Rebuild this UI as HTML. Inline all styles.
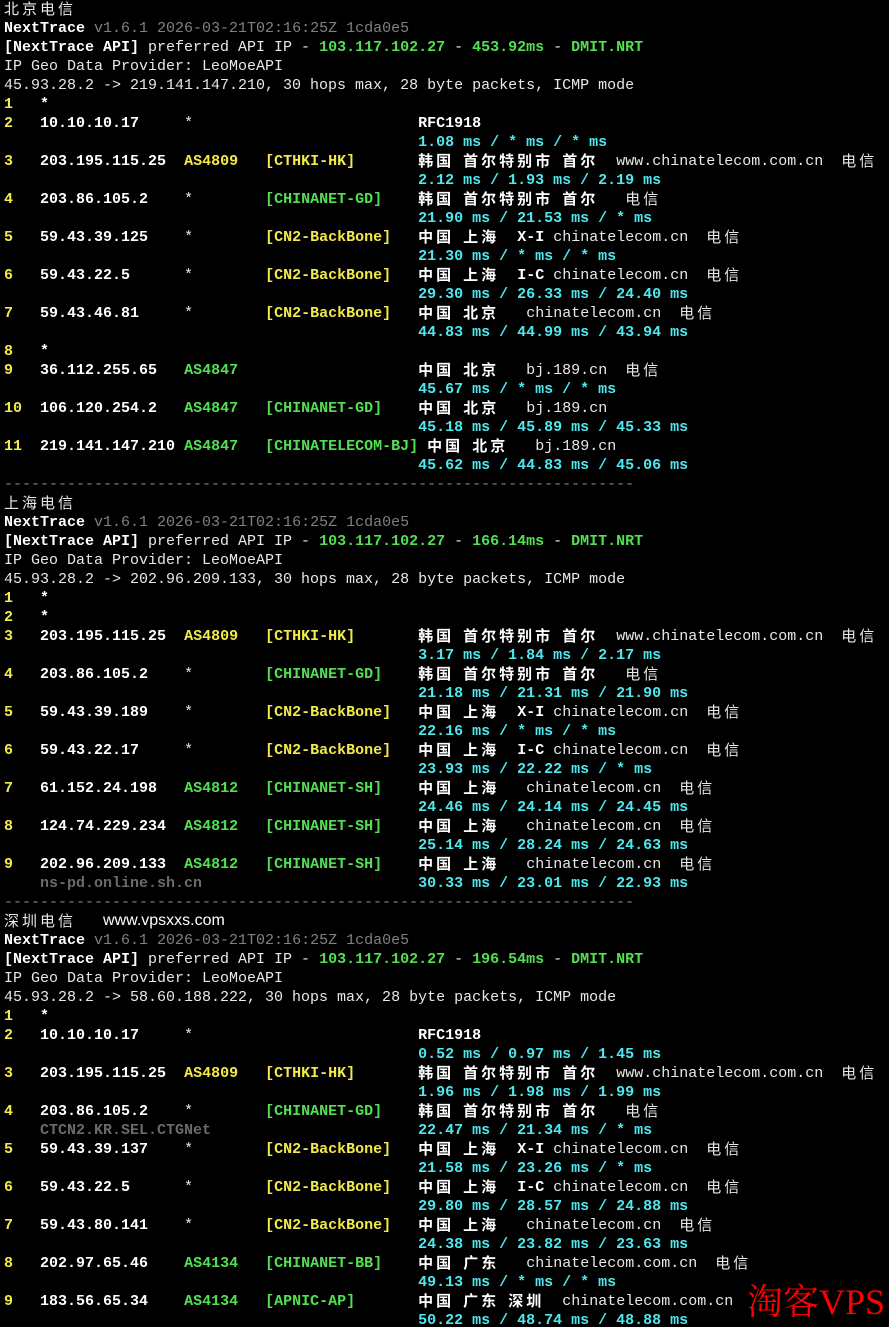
<!DOCTYPE html>
<html><head><meta charset="utf-8"><style>
html,body{margin:0;padding:0;background:#000;width:889px;height:1327px;overflow:hidden}
pre{margin:0;padding:0 0 0 4px;font:15px/19px "Liberation Mono",monospace;color:#e8e8e8;white-space:pre}
b{font-weight:bold;color:#fff}
.y{color:#f2ea48;font-weight:bold}
.g{color:#52e052;font-weight:bold}
.c{color:#4ee8ee;font-weight:bold}
.d{color:#808080}
.db{color:#6a6a6a;font-weight:bold}
.k,.kb,.vx{display:inline-block;height:19px;line-height:19px;vertical-align:top;overflow:visible;position:relative;top:-1px}
.k{font-family:"Noto Sans CJK SC","WenQuanYi Zen Hei",sans-serif;letter-spacing:3px}
.kb{font-family:"Noto Sans CJK SC","WenQuanYi Zen Hei",sans-serif;letter-spacing:3px;font-weight:bold;color:#fff}
.wm{position:absolute;left:747px;top:1274px;font:36px "Liberation Serif","Noto Serif CJK SC",serif;color:#f00}
.vx{font-family:"Liberation Sans",sans-serif;font-size:16px;color:#fff}
</style></head><body>
<pre><span class="k">北京电信</span>
<b>NextTrace</b> <span class="d">v1.6.1 2026-03-21T02:16:25Z 1cda0e5</span>
<b>[NextTrace API]</b> preferred API IP - <span class="g">103.117.102.27</span> - <span class="g">453.92ms</span> - <span class="g">DMIT.NRT</span>
IP Geo Data Provider: LeoMoeAPI
45.93.28.2 -> 219.141.147.210, 30 hops max, 28 byte packets, ICMP mode
<span class="y">1</span>   <b>*</b>
<span class="y">2</span>   <b>10.10.10.17</b>     *                         <b>RFC1918</b>
                                              <span class="c">1.08 ms / * ms / * ms</span>
<span class="y">3</span>   <b>203.195.115.25</b>  <span class="y">AS4809</span>   <span class="y">[CTHKI-HK]</span>       <span class="kb">韩国</span> <span class="kb">首尔特别市</span> <span class="kb">首尔</span>  www.chinatelecom.com.cn  <span class="k">电信</span>
                                              <span class="c">2.12 ms / 1.93 ms / 2.19 ms</span>
<span class="y">4</span>   <b>203.86.105.2</b>    *        <span class="g">[CHINANET-GD]</span>    <span class="kb">韩国</span> <span class="kb">首尔特别市</span> <span class="kb">首尔</span>   <span class="k">电信</span>
                                              <span class="c">21.90 ms / 21.53 ms / * ms</span>
<span class="y">5</span>   <b>59.43.39.125</b>    *        <span class="y">[CN2-BackBone]</span>   <span class="kb">中国</span> <span class="kb">上海</span>  <b>X-I</b> chinatelecom.cn  <span class="k">电信</span>
                                              <span class="c">21.30 ms / * ms / * ms</span>
<span class="y">6</span>   <b>59.43.22.5</b>      *        <span class="y">[CN2-BackBone]</span>   <span class="kb">中国</span> <span class="kb">上海</span>  <b>I-C</b> chinatelecom.cn  <span class="k">电信</span>
                                              <span class="c">29.30 ms / 26.33 ms / 24.40 ms</span>
<span class="y">7</span>   <b>59.43.46.81</b>     *        <span class="y">[CN2-BackBone]</span>   <span class="kb">中国</span> <span class="kb">北京</span>   chinatelecom.cn  <span class="k">电信</span>
                                              <span class="c">44.83 ms / 44.99 ms / 43.94 ms</span>
<span class="y">8</span>   <b>*</b>
<span class="y">9</span>   <b>36.112.255.65</b>   <span class="g">AS4847</span>                    <span class="kb">中国</span> <span class="kb">北京</span>   bj.189.cn  <span class="k">电信</span>
                                              <span class="c">45.67 ms / * ms / * ms</span>
<span class="y">10</span>  <b>106.120.254.2</b>   <span class="g">AS4847</span>   <span class="g">[CHINANET-GD]</span>    <span class="kb">中国</span> <span class="kb">北京</span>   bj.189.cn
                                              <span class="c">45.18 ms / 45.89 ms / 45.33 ms</span>
<span class="y">11</span>  <b>219.141.147.210</b> <span class="g">AS4847</span>   <span class="g">[CHINATELECOM-BJ]</span> <span class="kb">中国</span> <span class="kb">北京</span>   bj.189.cn
                                              <span class="c">45.62 ms / 44.83 ms / 45.06 ms</span>
<span class="d">----------------------------------------------------------------------</span>
<span class="k">上海电信</span>
<b>NextTrace</b> <span class="d">v1.6.1 2026-03-21T02:16:25Z 1cda0e5</span>
<b>[NextTrace API]</b> preferred API IP - <span class="g">103.117.102.27</span> - <span class="g">166.14ms</span> - <span class="g">DMIT.NRT</span>
IP Geo Data Provider: LeoMoeAPI
45.93.28.2 -> 202.96.209.133, 30 hops max, 28 byte packets, ICMP mode
<span class="y">1</span>   <b>*</b>
<span class="y">2</span>   <b>*</b>
<span class="y">3</span>   <b>203.195.115.25</b>  <span class="y">AS4809</span>   <span class="y">[CTHKI-HK]</span>       <span class="kb">韩国</span> <span class="kb">首尔特别市</span> <span class="kb">首尔</span>  www.chinatelecom.com.cn  <span class="k">电信</span>
                                              <span class="c">3.17 ms / 1.84 ms / 2.17 ms</span>
<span class="y">4</span>   <b>203.86.105.2</b>    *        <span class="g">[CHINANET-GD]</span>    <span class="kb">韩国</span> <span class="kb">首尔特别市</span> <span class="kb">首尔</span>   <span class="k">电信</span>
                                              <span class="c">21.18 ms / 21.31 ms / 21.90 ms</span>
<span class="y">5</span>   <b>59.43.39.189</b>    *        <span class="y">[CN2-BackBone]</span>   <span class="kb">中国</span> <span class="kb">上海</span>  <b>X-I</b> chinatelecom.cn  <span class="k">电信</span>
                                              <span class="c">22.16 ms / * ms / * ms</span>
<span class="y">6</span>   <b>59.43.22.17</b>     *        <span class="y">[CN2-BackBone]</span>   <span class="kb">中国</span> <span class="kb">上海</span>  <b>I-C</b> chinatelecom.cn  <span class="k">电信</span>
                                              <span class="c">23.93 ms / 22.22 ms / * ms</span>
<span class="y">7</span>   <b>61.152.24.198</b>   <span class="g">AS4812</span>   <span class="g">[CHINANET-SH]</span>    <span class="kb">中国</span> <span class="kb">上海</span>   chinatelecom.cn  <span class="k">电信</span>
                                              <span class="c">24.46 ms / 24.14 ms / 24.45 ms</span>
<span class="y">8</span>   <b>124.74.229.234</b>  <span class="g">AS4812</span>   <span class="g">[CHINANET-SH]</span>    <span class="kb">中国</span> <span class="kb">上海</span>   chinatelecom.cn  <span class="k">电信</span>
                                              <span class="c">25.14 ms / 28.24 ms / 24.63 ms</span>
<span class="y">9</span>   <b>202.96.209.133</b>  <span class="g">AS4812</span>   <span class="g">[CHINANET-SH]</span>    <span class="kb">中国</span> <span class="kb">上海</span>   chinatelecom.cn  <span class="k">电信</span>
    <span class="db">ns-pd.online.sh.cn</span>                        <span class="c">30.33 ms / 23.01 ms / 22.93 ms</span>
<span class="d">----------------------------------------------------------------------</span>
<span class="k">深圳电信</span>   <span class="vx">www.vpsxxs.com</span>
<b>NextTrace</b> <span class="d">v1.6.1 2026-03-21T02:16:25Z 1cda0e5</span>
<b>[NextTrace API]</b> preferred API IP - <span class="g">103.117.102.27</span> - <span class="g">196.54ms</span> - <span class="g">DMIT.NRT</span>
IP Geo Data Provider: LeoMoeAPI
45.93.28.2 -> 58.60.188.222, 30 hops max, 28 byte packets, ICMP mode
<span class="y">1</span>   <b>*</b>
<span class="y">2</span>   <b>10.10.10.17</b>     *                         <b>RFC1918</b>
                                              <span class="c">0.52 ms / 0.97 ms / 1.45 ms</span>
<span class="y">3</span>   <b>203.195.115.25</b>  <span class="y">AS4809</span>   <span class="y">[CTHKI-HK]</span>       <span class="kb">韩国</span> <span class="kb">首尔特别市</span> <span class="kb">首尔</span>  www.chinatelecom.com.cn  <span class="k">电信</span>
                                              <span class="c">1.96 ms / 1.98 ms / 1.99 ms</span>
<span class="y">4</span>   <b>203.86.105.2</b>    *        <span class="g">[CHINANET-GD]</span>    <span class="kb">韩国</span> <span class="kb">首尔特别市</span> <span class="kb">首尔</span>   <span class="k">电信</span>
    <span class="db">CTCN2.KR.SEL.CTGNet</span>                       <span class="c">22.47 ms / 21.34 ms / * ms</span>
<span class="y">5</span>   <b>59.43.39.137</b>    *        <span class="y">[CN2-BackBone]</span>   <span class="kb">中国</span> <span class="kb">上海</span>  <b>X-I</b> chinatelecom.cn  <span class="k">电信</span>
                                              <span class="c">21.58 ms / 23.26 ms / * ms</span>
<span class="y">6</span>   <b>59.43.22.5</b>      *        <span class="y">[CN2-BackBone]</span>   <span class="kb">中国</span> <span class="kb">上海</span>  <b>I-C</b> chinatelecom.cn  <span class="k">电信</span>
                                              <span class="c">29.80 ms / 28.57 ms / 24.88 ms</span>
<span class="y">7</span>   <b>59.43.80.141</b>    *        <span class="y">[CN2-BackBone]</span>   <span class="kb">中国</span> <span class="kb">上海</span>   chinatelecom.cn  <span class="k">电信</span>
                                              <span class="c">24.38 ms / 23.82 ms / 23.63 ms</span>
<span class="y">8</span>   <b>202.97.65.46</b>    <span class="g">AS4134</span>   <span class="g">[CHINANET-BB]</span>    <span class="kb">中国</span> <span class="kb">广东</span>   chinatelecom.com.cn  <span class="k">电信</span>
                                              <span class="c">49.13 ms / * ms / * ms</span>
<span class="y">9</span>   <b>183.56.65.34</b>    <span class="g">AS4134</span>   <span class="g">[APNIC-AP]</span>       <span class="kb">中国</span> <span class="kb">广东</span> <span class="kb">深圳</span>  chinatelecom.com.cn
                                              <span class="c">50.22 ms / 48.74 ms / 48.88 ms</span></pre>
<div class="wm">淘客VPS</div>
</body></html>
